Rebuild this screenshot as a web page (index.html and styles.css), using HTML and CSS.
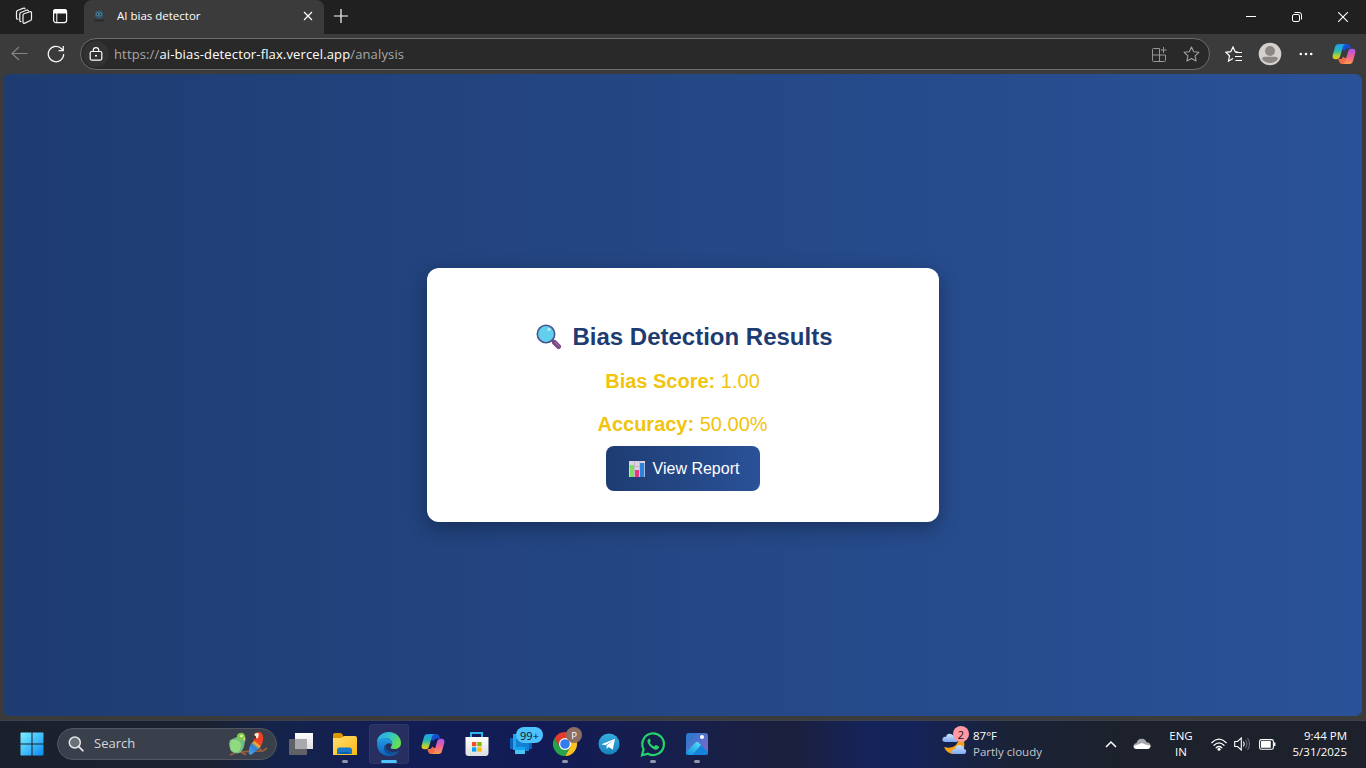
FILE: index.html
```html
<!DOCTYPE html>
<html lang="en">
<head>
<meta charset="utf-8">
<title>AI bias detector</title>
<link rel="stylesheet" href="styles.css">
</head>
<body>
<svg class="defs" width="0" height="0" aria-hidden="true">
  <defs>
    <linearGradient id="cpA" x1="0" y1="0" x2="0" y2="1"><stop offset="0" stop-color="#1b9df0"/><stop offset=".45" stop-color="#2bb8b0"/><stop offset=".75" stop-color="#a6cf3c"/><stop offset="1" stop-color="#f5c518"/></linearGradient>
    <linearGradient id="cpB" x1="0" y1="0" x2="0" y2="1"><stop offset="0" stop-color="#a855f0"/><stop offset=".5" stop-color="#f0609a"/><stop offset="1" stop-color="#ff9a4a"/></linearGradient>
    <linearGradient id="win" x1="0" y1="0" x2="1" y2="1"><stop offset="0" stop-color="#7df0ff"/><stop offset="1" stop-color="#0a8cf5"/></linearGradient>
    <linearGradient id="fold" x1="0" y1="0" x2="1" y2="1"><stop offset="0" stop-color="#ffdf70"/><stop offset="1" stop-color="#fdb913"/></linearGradient>
    <linearGradient id="edgeG" x1="0" y1="0" x2="1" y2=".5"><stop offset="0" stop-color="#2aa5e8"/><stop offset=".5" stop-color="#2fc3cd"/><stop offset="1" stop-color="#65e052"/></linearGradient>
    <linearGradient id="edgeB" x1="0" y1="0" x2="0" y2="1"><stop offset="0" stop-color="#249de5"/><stop offset="1" stop-color="#0b62bd"/></linearGradient>
    <linearGradient id="tv" x1="0" y1="0" x2="0" y2="1"><stop offset="0" stop-color="#34aee2"/><stop offset="1" stop-color="#1683bd"/></linearGradient>
    <linearGradient id="photo" x1="0" y1="0" x2="1" y2="1"><stop offset="0" stop-color="#207cd0"/><stop offset="1" stop-color="#8a63c5"/></linearGradient>
    <linearGradient id="mount" x1="0" y1="1" x2="1" y2="0"><stop offset="0" stop-color="#0e8ce0"/><stop offset="1" stop-color="#5be0f5"/></linearGradient>
    <linearGradient id="cloudG" x1="0" y1="0" x2="0" y2="1"><stop offset="0" stop-color="#cfe2ff"/><stop offset="1" stop-color="#7fabf0"/></linearGradient>
    <linearGradient id="macaw" gradientUnits="userSpaceOnUse" x1="35" y1="3" x2="21" y2="20"><stop offset=".45" stop-color="#ef4023"/><stop offset=".55" stop-color="#f5b52c"/><stop offset=".7" stop-color="#2e7fd6"/><stop offset="1" stop-color="#3d9be8"/></linearGradient>
    <linearGradient id="store" x1="0" y1="0" x2="0" y2="1"><stop offset="0" stop-color="#fff"/><stop offset="1" stop-color="#dedede"/></linearGradient>
    <symbol id="copilot" viewBox="0 0 24 24">
      <path d="M7 2H15.500C17.500 2 18.200 3.500 19 6.500H16.500C14.500 6.500 13.300 7 12.600 9L11 8H7z" fill="#174fd0"/>
      <path d="M17 22H10C8 22 7.300 20.500 6.300 17H8.200C9.600 17 10.500 16.400 11.200 14.500L13 16H17z" fill="#f26c45"/>
      <path d="M7 2H13.500C12 2.300 11.300 3.800 10.600 6L8.200 14C7.600 16.300 6.500 17.300 4.500 17.300H3.500C1 17.300 0 15.500.8 12.700L3 5C3.700 2.800 4.800 2 7 2z" fill="url(#cpA)"/>
      <path d="M17.500 22H11C12.300 21.500 13 20 13.700 18L16 10C16.700 7.700 17.600 6.700 19.700 6.700H20.500C23 6.700 24 8.500 23.200 11.300L21 19C20.400 21.200 19.400 22 17.500 22z" fill="url(#cpB)"/>
    </symbol>
  </defs>
</svg>

<header class="tabstrip">
  <svg class="ic-workspaces" width="18" height="18" viewBox="0 0 18 18"><g fill="none" stroke="#f2f2f2" stroke-width="1.200" stroke-linejoin="round" stroke-linecap="round"><path d="M8 8.200q0-1 1-1.400l5.700-2q1.800-.5 1.800 1V12q0 1-1 1.500l-5.600 2.600Q8 17 8 15.200z"/><path d="M6 14.500q-1.200.3-1.200-1V7q0-1 1-1.500l5.500-2.200q1.700-.6 2 .5"/><path d="M3 12q-1.500.3-1.500-1V5q0-1 1-1.500L8 1.400q1.700-.6 2 .4"/></g></svg>
  <svg class="ic-vertical" width="16" height="16" viewBox="0 0 16 16"><rect x="1.600" y="1.600" width="13" height="13" rx="2.300" fill="none" stroke="#fff" stroke-width="1.200"/><path d="M1 5.500V4a3 3 0 0 1 3-3h8a3 3 0 0 1 3 3v1.500z" fill="#fff"/><path d="M4.800 5v9" stroke="#fff" stroke-width="1"/></svg>
  <div class="tab">
    <svg class="favicon" width="12" height="12" viewBox="0 0 12 12"><circle cx="6" cy="4.500" r="4" fill="#315c70"/><circle cx="4.500" cy="4.300" r="1.200" fill="#152732" stroke="#78b2cc" stroke-width=".6"/><circle cx="7.500" cy="4.300" r="1.200" fill="#152732" stroke="#78b2cc" stroke-width=".6"/><path d="M1 10.500h10" stroke="#202930" stroke-width="1.500"/></svg>
    <span class="tab-title">AI bias detector</span>
    <svg class="tab-close" width="10" height="10" viewBox="0 0 10 10"><path d="M1 1l8 8M9 1L1 9" stroke="#fff" stroke-width="1.200"/></svg>
  </div>
  <svg class="ic-plus" width="14" height="14" viewBox="0 0 14 14"><path d="M7 0v14M0 7h14" stroke="#fff" stroke-width="1.200"/></svg>
  <div class="window-controls">
    <svg width="10" height="10" viewBox="0 0 10 10"><path d="M0 4.500h10" stroke="#fff"/></svg>
    <svg width="10" height="10" viewBox="0 0 10 10"><g fill="none" stroke="#fff"><rect x=".5" y="2.500" width="7" height="7" rx="1.500"/><path d="M2.500.5H7A2.500 2.500 0 0 1 9.500 3v4.500"/></g></svg>
    <svg width="10" height="10" viewBox="0 0 10 10"><path d="M0 0l10 10M10 0L0 10" stroke="#fff" stroke-width="1.100"/></svg>
  </div>
</header>

<nav class="toolbar">
  <svg class="ic-back" width="17" height="16" viewBox="0 0 17 16"><path d="M16.500 7.500H1M8 1L1 7.500 8 14" fill="none" stroke="#858585" stroke-width="1.100"/></svg>
  <svg class="ic-reload" width="18" height="18" viewBox="0 0 18 18"><path d="M16.700 9A7.700 7.700 0 1 1 14.800 4L16 5.400M16.300 1v4.700h-4.800" fill="none" stroke="#f5f5f5" stroke-width="1.250"/></svg>
  <div class="address">
    <span class="lock"><svg width="14" height="15" viewBox="0 0 14 15"><g fill="none" stroke="#fff" stroke-width="1.200"><rect x="1.200" y="4.500" width="11.600" height="8.600" rx="1.500"/><path d="M4.300 4.500V3.300a2.700 2.700 0 0 1 5.400 0v1.200"/></g><circle cx="7" cy="8.800" r="1" fill="#fff"/></svg></span>
    <span class="url">https://<b>ai-bias-detector-flax.vercel.app</b>/analysis</span>
    <svg class="ic-apps" width="15" height="15" viewBox="0 0 15 15"><g fill="none" stroke="#969696"><path d="M7.500 1.500H1.500a1 1 0 0 0-1 1v11a1 1 0 0 0 1 1h11a1 1 0 0 0 1-1v-5.500H.5M7.500 1.500v13"/><path d="M11.500 0v6M8.700 3h6"/></g></svg>
    <svg class="ic-star" width="17" height="16" viewBox="0 0 17 16"><path d="M8.500 1l2.200 4.700 5.200.6-3.800 3.500 1 5.100-4.600-2.500-4.600 2.500 1-5.100L1.100 6.300l5.200-.6z" fill="none" stroke="#a0a0a0" stroke-width="1.100" stroke-linejoin="round"/></svg>
  </div>
  <svg class="ic-favs" width="18" height="17" viewBox="0 0 18 17"><path d="M12.500 5.800 10 5.500 8 1 5.800 5.700l-5 .6 3.700 3.500-1 5.200L8 12.500M10.500 6.500h6.500M10 10.500h7M10.500 14.500h6.500" fill="none" stroke="#fff" stroke-width="1.200"/></svg>
  <svg class="ic-profile" width="24" height="24" viewBox="0 0 24 24"><circle cx="12" cy="12" r="11.300" fill="#d3d0ce"/><circle cx="12" cy="9" r="5" fill="#8b8784"/><path d="M4 17q.3-2.200 3-2.200h10q2.700 0 3 2.200a10 10 0 0 1-16 0z" fill="#8b8784"/></svg>
  <svg class="ic-more" width="14" height="4" viewBox="0 0 14 4"><g fill="#fff"><circle cx="1.800" cy="2" r="1.300"/><circle cx="7" cy="2" r="1.300"/><circle cx="12.200" cy="2" r="1.300"/></g></svg>
  <svg class="ic-copilot" width="24" height="24"><use href="#copilot"/></svg>
</nav>

<main class="page">
  <section class="card">
    <h2 class="title">
      <svg width="26" height="26" viewBox="0 0 26 26"><path d="M16 16l3 3" stroke="#5c5070" stroke-width="3"/><path d="M18.500 18.500l4 4" stroke="#7b4b86" stroke-width="5" stroke-linecap="round"/><path d="M19 18l4.500 4.500" stroke="#a66bab" stroke-width="1"/><circle cx="10" cy="10" r="8.700" fill="#62cfee" stroke="#4a5590" stroke-width="1.600"/><circle cx="13" cy="5.500" r="1.500" fill="#b9eefb"/></svg>
      <span>Bias Detection Results</span>
    </h2>
    <p class="metric"><strong>Bias Score:</strong> 1.00</p>
    <p class="metric"><strong>Accuracy:</strong> 50.00%</p>
    <button class="report">
      <svg width="16" height="16" viewBox="0 0 16 16"><path d="M0 0h16v16H0z" fill="#ddd4e3"/><path d="M0 5.500h16M5.500 0v16M10.800 0v16" stroke="#b9acc3" stroke-width=".7"/><path d="M1 4h4v12H1z" fill="#83dc62"/><path d="M6 9h4v7H6z" fill="#e9377f"/><path d="M11 2h4.300v14H11z" fill="#2b83dc"/></svg>
      <span>View Report</span>
    </button>
  </section>
</main>

<footer class="taskbar">
  <svg class="ic-start" width="24" height="24" viewBox="0 0 24 24"><path d="M1 .5H11.500V11.500H.5V1zM12.500.5H23L23.500 1V11.500H12.500zM.5 12.500H11.500V23.500H1L.5 23zM12.500 12.500H23.500V23L23 23.500H12.500z" fill="url(#win)"/></svg>
  <div class="search">
    <svg width="16" height="16" viewBox="0 0 16 16"><circle cx="6.800" cy="6.500" r="5.500" fill="#687079" stroke="#e5e6e8" stroke-width="1.500"/><path d="M10.800 10.700l4 4" stroke="#e5e6e8" stroke-width="1.800" stroke-linecap="round"/></svg>
    <span>Search</span>
    <svg class="birds" width="40" height="26" viewBox="0 0 40 26"><path d="M2 24q5-3 11-3 13-1 22-1l4-3M13 21l5 3M34 20l-3-3" fill="none" stroke="#9b603b" stroke-width="1.700"/><path d="M3 20Q0 14 2 9l7-3Q9 2 13 2q5 1 4 8-1 10-6 12-5 1-8-2z" fill="#70bd89"/><path d="M3 19Q1 12 4 9q7-1 9 4 0 6-3 8-4 1-7-2z" fill="#91da80"/><path d="M9 5q2-4 6-3 3 2 2 6l-6 2z" fill="#7ecb4b"/><circle cx="13.500" cy="5" r="1.300" fill="#fff4ad"/><path d="M17 6l.5 4-2.500-2z" fill="#e7d299"/><path d="M26 10Q25 2 30 1q6 0 5 8-1 7-7 11l-5 4-2-1q-1-9 5-13z" fill="url(#macaw)"/><path d="M26.500 3q2-2 4.500 0l-1 4-3 .5z" fill="#f5e6d5"/><path d="M26.500 4.500l1.500 1-.5 3q-2-1-1-4z" fill="#222"/></svg>
  </div>
  <div class="apps">
    <div class="app"><svg width="28" height="28" viewBox="0 0 28 28"><path d="M8 3h18v16H8z" fill="url(#store)"/><rect x="2" y="9" width="18" height="16" rx="1" fill="#606268"/><path d="M8 9h12v10H8z" fill="#a9a9ac"/></svg></div>
    <div class="app running"><svg width="28" height="28" viewBox="0 0 28 28"><path d="M2 5q0-2 2-2h6l2 2v4H2z" fill="#dc9700"/><path d="M2 8h8l3-2h11q2 0 2 2v17H2z" fill="url(#fold)"/><path d="M6 24v-4q0-2.500 2.500-2.500h10q2.500 0 2.500 2.500v4z" fill="#1679cb"/><path d="M8.500 24v-2h10v2z" fill="#075fae"/></svg></div>
    <div class="app active"><svg width="28" height="28" viewBox="0 0 28 28"><path d="M2 13C2 6 7 2 14 2c7 0 12 5 12 11 0 4-3 6-7 6-3 0-4-1-3-2 3-4 0-8-4-9-4 0-8 1-10 5z" fill="url(#edgeG)"/><path d="M2 14C3 9 7 7 11 8c4 0 7 3 6 7-2-3-6-2-7 1-1 5 4 8 9 7l5-2c-2 4-6 5-10 5C7 26 2 21 2 14z" fill="url(#edgeB)"/><path d="M10 15c-3 4 1 11 7 10 4-1 6-2 7-4-5 2-12 1-13-4z" fill="#104f91"/></svg></div>
    <div class="app"><svg width="24" height="24"><use href="#copilot"/></svg></div>
    <div class="app"><svg width="28" height="28" viewBox="0 0 28 28"><path d="M8 8V3h11v5" fill="none" stroke="#2fb5ed" stroke-width="2"/><path d="M2.500 7h23v16q0 3-3 3h-17q-3 0-3-3z" fill="url(#store)"/><path d="M9 12h4.300v4.300H9z" fill="#f25022"/><path d="M14.300 12h4.300v4.300h-4.300z" fill="#7fba00"/><path d="M9 17.300h4.300v4.300H9z" fill="#00a4ef"/><path d="M14.300 17.300h4.300v4.300h-4.300z" fill="#ffb900"/></svg></div>
    <div class="app"><svg width="28" height="28" viewBox="0 0 28 28"><path d="M3 8h6v11H3zM20 8h5v11h-5z" fill="#0a61b5"/><path d="M6 4h9v16H6z" fill="#22a6e8"/><path d="M9 9h13v12H9z" fill="#1380d4"/><path d="M8 17h10v7H8z" fill="#0fa5ef"/><path d="M8 20h10v4H8z" fill="#49c5f4"/></svg><span class="badge count">99+</span></div>
    <div class="app running"><svg width="28" height="28" viewBox="0 0 28 28"><path d="M14 8h10.400A12 12 0 0 1 14 26l5.200-9z" fill="#fcc31e"/><path d="M3.600 8A12 12 0 0 1 24.400 8H14L8.800 17z" fill="#e33b2e"/><path d="M3.600 8l5.200 9 10.400 0L14 26A12 12 0 0 1 3.600 8z" fill="#29a34a"/><circle cx="14" cy="14" r="6" fill="#fff"/><circle cx="14" cy="14" r="4.800" fill="#327cee"/></svg><span class="badge profile">P</span></div>
    <div class="app"><svg width="28" height="28" viewBox="0 0 28 28"><circle cx="14" cy="14" r="10.500" fill="url(#tv)"/><path d="M6.500 14.200L20 8.800l-2.200 11-4-2.900-2.200 2.200v-3.900l6.500-4.800-8 4.900z" fill="#fff"/></svg></div>
    <div class="app running"><svg width="28" height="28" viewBox="0 0 28 28"><path d="M3 25.300l1.600-6A10.800 10.800 0 1 1 9 23.700z" fill="none" stroke="#26d366" stroke-width="2.200"/><path d="M10 8.500q-2 1-1.500 3.500 1.500 5 7 7.500 3 1 4.500-2l-.2-1.200-3-1.400-1.600 1.700q-3-1.100-4.500-4.100l1.100-1.500L10.700 8.500z" fill="#26d366"/></svg></div>
    <div class="app running"><svg width="28" height="28" viewBox="0 0 28 28"><rect x="3" y="3" width="22" height="22" rx="2.500" fill="url(#photo)"/><path d="M3 22l9.500-9.500q1.500-1.500 3 0L25 22v.5q0 2.500-2.500 2.500h-17Q3 25 3 22.500z" fill="#1583dc"/><path d="M3 22l9.500-9.500q1.500-1.500 3 0l2.500 2.500-9 10H5.500Q3 25 3 22.500z" fill="url(#mount)"/><circle cx="19" cy="7" r="2" fill="#fff"/></svg></div>
  </div>
  <div class="weather">
    <div class="weather-icon"><svg width="26" height="26" viewBox="0 0 26 26"><path d="M3 16q8 2 12-2l3-5 5 1q2 12-7 13Q6 24 3 16z" fill="#f7a11b"/><path d="M4 11q-4-1-2-4 1-2 3-1 1-4 5-3 3 1 4 4 3 1 2 4z" fill="url(#cloudG)"/><path d="M14 23q-4 0-3-3 1-2 3-2 1-4 5-4 4 1 4 4 3 1 2 3 0 2-2 2z" fill="url(#cloudG)"/></svg><span class="badge alert">2</span></div>
    <div class="stack left"><span class="temp">87°F</span><span class="sky">Partly cloudy</span></div>
  </div>
  <div class="tray">
    <svg class="ic-up" width="12" height="8" viewBox="0 0 12 8"><path d="M1 7l5-5 5 5" fill="none" stroke="#fff" stroke-width="1.500"/></svg>
    <svg class="ic-cloud" width="18" height="12" viewBox="0 0 18 12"><path d="M3.500 11Q0 10.500.5 7.500 1 5 3.500 5 5 .5 9 .8q3.500.3 4.500 3.500 4 .2 4 3.500 0 3-3.300 3.200z" fill="#a6a8ab"/><path d="M3.500 11Q.5 10.500.8 8L9 5q3.500 2 8.500 2.500 0 3.200-3.300 3.500z" fill="#fff"/></svg>
    <div class="stack lang"><span>ENG</span><span>IN</span></div>
    <svg class="ic-wifi" width="16" height="13" viewBox="0 0 16 13"><g fill="none" stroke="#fff" stroke-width="1.200" stroke-linecap="round"><path d="M.7 4.700q7.300-7 14.600 0M3 7.300q5-4.800 10 0M5.200 9.800q2.800-2.600 5.600 0"/></g><circle cx="8" cy="11.300" r="1.500" fill="#fff"/></svg>
    <svg class="ic-volume" width="16" height="14" viewBox="0 0 16 14"><g fill="none" stroke="#fff" stroke-width="1.100"><path d="M.7 4.500h2.800L7.300 1v12L3.500 9.500H.7z"/><path d="M9.500 4.500q1.500 2.500 0 5"/><path d="M11.500 2.800q3 4.200 0 8.400M13.500 1q4 6 0 12" stroke="#656a73"/></g></svg>
    <svg class="ic-battery" width="17" height="11" viewBox="0 0 17 11"><rect x=".6" y=".6" width="13.800" height="9.600" rx="1.800" fill="none" stroke="#fff" stroke-width="1.100"/><rect x="2" y="2" width="9.800" height="6.800" rx=".6" fill="#fff"/><path d="M15.700 3.500v3.500" stroke="#fff" stroke-width="1.400"/></svg>
    <div class="stack clock"><span>9:44 PM</span><span>5/31/2025</span></div>
  </div>
</footer>
</body>
</html>
```

FILE: styles.css
```css
* { box-sizing: border-box; }
body {
  margin: 0;
  width: 1366px;
  height: 768px;
  overflow: hidden;
  display: flex;
  flex-direction: column;
  background: #3b3b3b;
  color: #fff;
  font-family: "Open Sans", "Noto Sans", sans-serif;
  font-size: 12px;
}
svg { display: block; flex: none; }
.defs { position: absolute; }

/* Tab strip */
.tabstrip { height: 34px; flex: none; display: flex; align-items: center; background: #202020; }
.ic-workspaces { margin-left: 15px; margin-top: -2px; }
.ic-vertical { margin-left: 19px; margin-top: -2px; }
.tab {
  width: 240px;
  height: 34px;
  margin-left: 16px;
  padding: 0 11px 2px 9px;
  display: flex;
  align-items: center;
  border-radius: 8px 8px 0 0;
  background: #3b3b3b;
}
.favicon { margin-right: 12px; }
.tab-title { font-size: 11.5px; flex: 1; margin-top: -2px; white-space: nowrap; }
.ic-plus { margin-left: 10px; margin-top: -2px; }
.window-controls { margin-left: auto; padding-right: 18px; display: flex; gap: 36px; }

/* Toolbar */
.toolbar { height: 40px; flex: none; display: flex; align-items: center; }
.ic-back { margin-left: 11px; }
.ic-reload { margin-left: 19px; }
.address {
  width: 1130px;
  height: 32px;
  margin-left: 15px;
  padding: 0 9px 0 2px;
  display: flex;
  align-items: center;
  border: 1px solid #6d6d6d;
  border-radius: 16px;
  background: #292929;
}
.lock { width: 26px; height: 26px; display: grid; place-items: center; border-radius: 50%; background: #323232; }
.url { flex: 1; margin-left: 5px; font-size: 13px; letter-spacing: .136px; color: #a8a8a8; white-space: nowrap; }
.url b { font-weight: 400; color: #fff; }
.ic-star { margin-left: 16px; }
.ic-favs { margin-left: 15px; }
.ic-profile { margin-left: 15px; }
.ic-more { margin-left: 17px; }
.ic-copilot { margin-left: 19px; }

/* Analysis page */
.page {
  height: 642px;
  flex: none;
  margin: 0 4px 0 3px;
  display: grid;
  place-items: center;
  border-radius: 7px;
  background: linear-gradient(to right, #1e3c72, #2a5298);
  font-family: "Liberation Sans", Arial, sans-serif;
}
.card {
  width: 512px;
  height: 254px;
  padding-top: 55px;
  display: flex;
  flex-direction: column;
  align-items: center;
  border-radius: 12px;
  background: #fff;
  box-shadow: 0 6px 20px rgba(0, 0, 0, .3);
}
.title {
  margin: 0 0 18px;
  padding-left: 4px;
  height: 28px;
  display: flex;
  align-items: center;
  gap: 10px;
  font-size: 24px;
  color: #1e3c72;
}
.metric { margin: 0 0 19px; font-size: 20px; line-height: 24px; color: #f1c40f; }
.metric + .metric { margin-bottom: 10px; }
.report {
  width: 154px;
  height: 45px;
  padding: 1px 0 0 3px;
  display: flex;
  align-items: center;
  justify-content: center;
  gap: 8px;
  border: 0;
  border-radius: 8px;
  background: linear-gradient(to right, #1e3c72, #2a5298);
  color: #fff;
  font: 16px "Liberation Sans", Arial, sans-serif;
}

/* Taskbar */
.taskbar {
  height: 48px;
  margin-top: 4px;
  padding-bottom: 1px;
  flex: none;
  display: flex;
  align-items: center;
  border-top: 1px solid #3c414d;
  background: linear-gradient(to right, #1b212c 0, #1b212e 200px, #14234a 275px, #131e55 390px, #121b55 540px, #171f4c 680px, #1b1f3c 790px, #14235a 870px, #14235a 910px, #1a2236 1010px, #1c212c 1120px);
}
.ic-start { margin-left: 20px; }
.search {
  width: 220px;
  height: 32px;
  margin-left: 13px;
  padding: 0 8px 0 10px;
  display: flex;
  align-items: center;
  border: 1px solid #505763;
  border-radius: 16px;
  background: #3a404b;
  font-size: 13px;
  color: #d4d6d9;
}
.search span { margin: -2px 0 0 10px; flex: 1; }
.apps { display: flex; margin-left: 4px; gap: 4px; }
.app { position: relative; width: 40px; height: 40px; display: grid; place-items: center; border-radius: 4px; }
.active { background: #272e60; box-shadow: inset 0 0 0 1px #303768; }
.running::after, .active::after {
  content: "";
  position: absolute;
  bottom: 1px;
  left: 17px;
  width: 6px;
  height: 3px;
  border-radius: 2px;
  background: #9297ad;
}
.active::after { left: 12px; width: 16px; background: #4cc2ff; }
.badge { position: absolute; display: grid; place-items: center; color: #111; }
.count { left: 15px; top: 3px; width: 27px; height: 16px; border-radius: 8px; background: #4cc2ff; font-size: 11px; }
.profile { left: 21px; top: 3px; width: 16px; height: 16px; border-radius: 50%; background: #8d6e63; color: #fff; font-size: 9.5px; }
.weather { display: flex; align-items: center; margin-left: 224px; gap: 6px; }
.weather-icon { position: relative; }
.alert { left: 12px; top: -5px; width: 16px; height: 16px; border-radius: 50%; background: #ff99a4; font-size: 11px; }
.stack { display: flex; flex-direction: column; line-height: 16px; white-space: nowrap; font-size: 11.5px; }
.sky { color: #c5c7cc; }
.tray { margin-left: auto; padding-right: 19px; display: flex; align-items: center; }
.ic-cloud { margin-left: 16px; }
.lang { width: 26px; margin-left: 17px; align-items: center; }
.ic-wifi { margin-left: 17px; }
.ic-volume { margin-left: 7px; }
.ic-battery { margin-left: 9px; }
.clock { width: 58px; margin-left: 13px; align-items: flex-end; }
```
